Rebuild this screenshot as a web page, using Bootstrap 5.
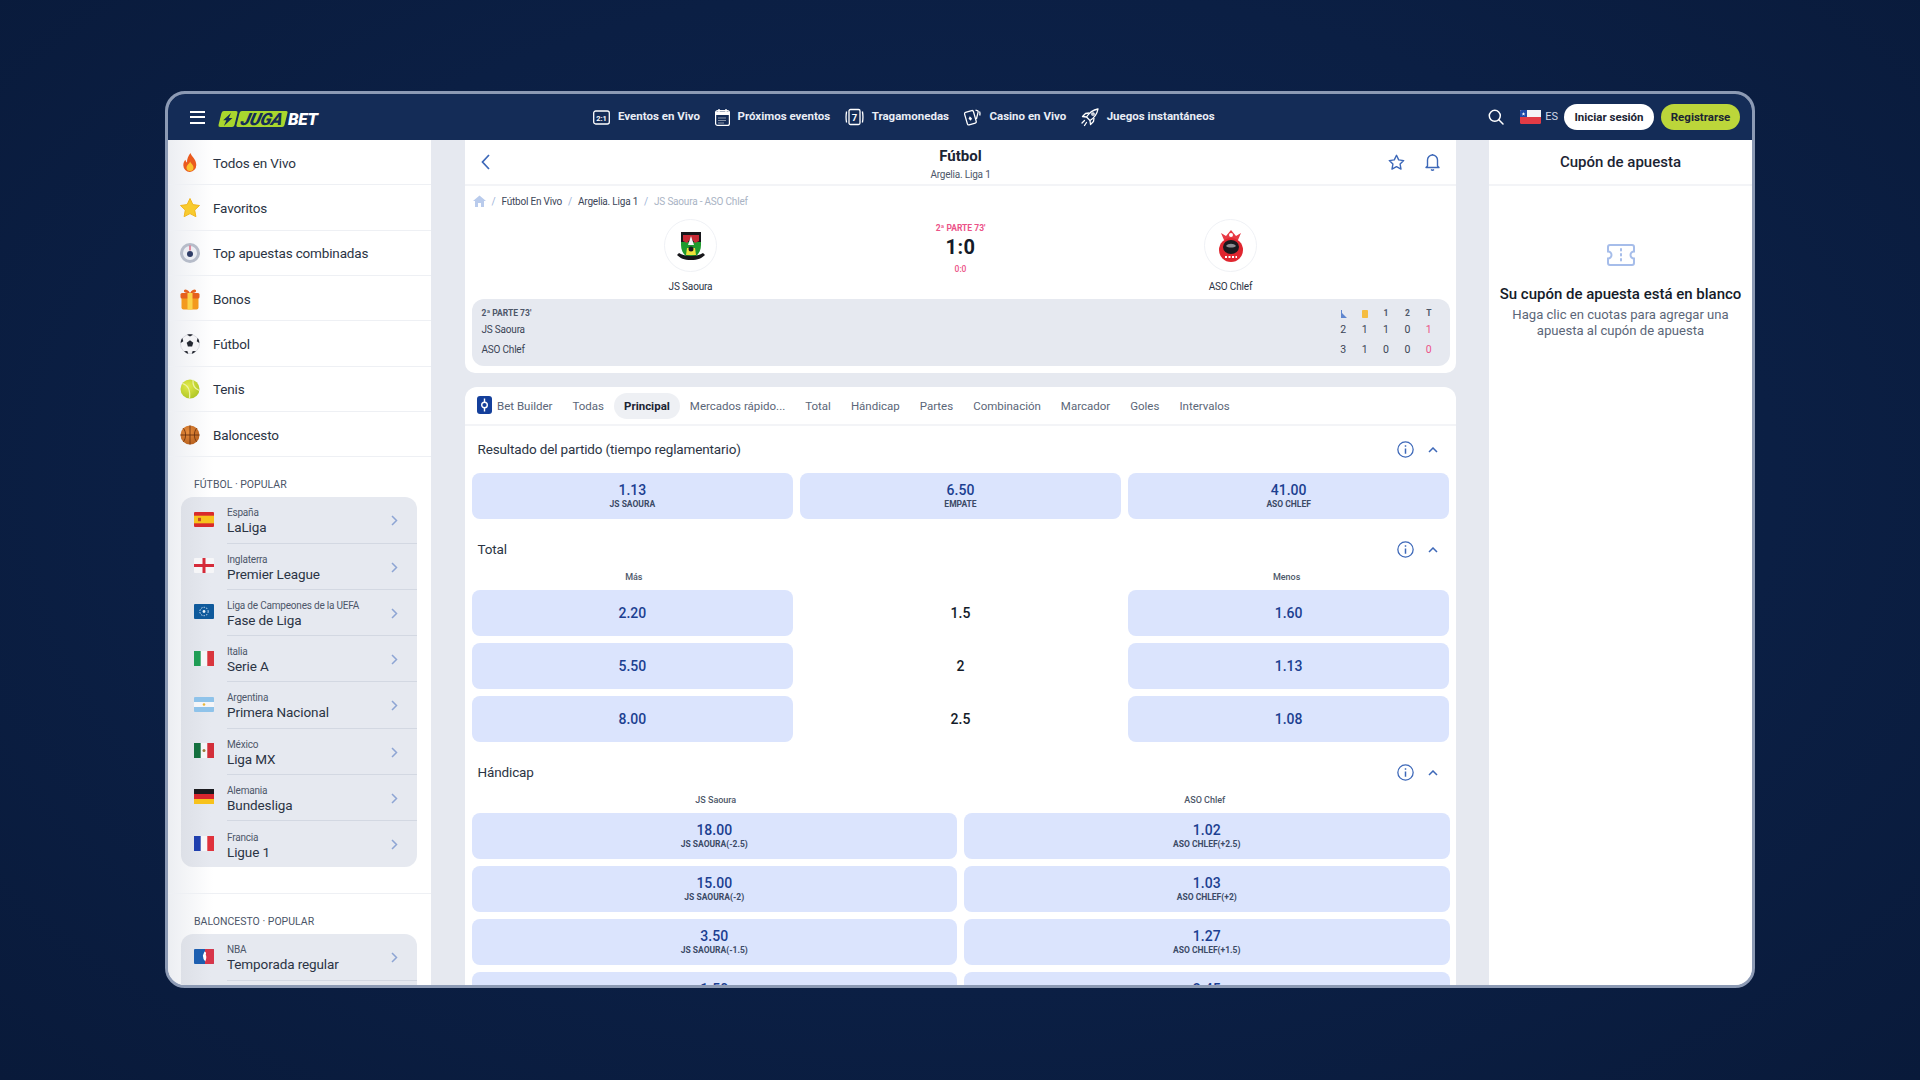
<!DOCTYPE html>
<html lang="es">
<head>
  <meta charset="UTF-8" />
  <meta name="viewport" content="width=device-width, initial-scale=1" />
  <title>JugaBet - Fútbol</title>
  <link href="https://cdn.jsdelivr.net/npm/bootstrap@5.3.2/dist/css/bootstrap.min.css" rel="stylesheet" />
  <style>
    html, body { height: 100%; }
    body {
      font-family: Roboto, "Liberation Sans", sans-serif;
      background: radial-gradient(ellipse at 50% 45%, #0e2550 0%, #0b1f44 60%, #091a3a 100%);
      overflow: hidden;
      padding-top: 91px;
    }
    .app-window {
      width: 1590px;
      height: 897px;
      border: 3px solid #8c9ab4;
      border-radius: 20px;
      background: #e6e9f0;
      overflow: hidden;
    }
    /* top bar */
    .top-bar { height: 46px; flex: none; background: #142c57; color: #fff; }
    .burger { width: 15px; margin-left: 22px; }
    .burger span { display: block; height: 2px; background: #fff; margin: 3.5px 0; }
    .brand { margin: 4px 0 0 15px; width: 100px; height: 16px; font: italic 900 17px/16px Roboto, sans-serif; letter-spacing: -.3px; }
    .brand-bolt, .brand-juga { background: #a9d62e; transform: skewX(-14deg); border-radius: 2px; height: 16px; }
    .brand-bolt { width: 16px; }
    .brand-juga { width: 48px; margin-left: 2px; color: #142c57; text-align: center; }
    .brand-bet { margin-left: 2px; }
    .top-nav { margin-left: 273px; }
    .top-link { font-size: 11.5px; font-weight: 700; color: #e9edf5; text-decoration: none; margin-right: 14.5px; line-height: 14px; margin-top: -2px; }
    .top-link svg { margin-right: 8px; margin-top: 2px; }
    .lang { font-size: 11px; color: #d3d9e6; margin-right: 6px; }
    .btn-login, .btn-signup {
      font-size: 11.5px; font-weight: 700; height: 26px; padding: 0; border: 0; border-radius: 13px; color: #1b2433; line-height: 26px;
    }
    .btn-login { width: 90px; background: #fff; }
    .btn-signup { width: 79px; background: #bcd63a; margin: 0 12px 0 7px; }
    /* main columns */
    .body-row { height: 848px; overflow: hidden; }
    .side-col { width: 263px; flex: none; background: linear-gradient(90deg, #eceef2 0, #fff 45px); overflow: hidden; }
    .center-col { width: 991px; flex: none; margin: 0 33px 0 34px; }
    .right-col { width: 263px; flex: none; background: #fff; }
    /* sidebar */
    .side-item { height: 45.33px; border-bottom: 1px solid #eef0f4; padding: 1px 0 0 11px; font-size: 13.5px; letter-spacing: -.15px; color: #2b3444; }
    .side-item svg { width: 22px; height: 22px; margin-right: 12px; flex: none; }
    .side-head { font-size: 10.5px; color: #4b5568; padding-left: 26px; line-height: 14px; }
    .side-head.first { margin: 21px 0 5px; }
    .side-gap { height: 27px; border-bottom: 1px solid #eef0f4; }
    .league-group { margin: 0 14px 0 13px; background: linear-gradient(90deg, #dde0e7 0, #e6e9f0 30px); border-radius: 12px; overflow: hidden; }
    .league-row { height: 46.25px; position: relative; }
    .league-row > svg.flag { width: 20px; height: 15px; margin: 0 13px 2px 13px; flex: none; }
    .league-text { flex: 1; height: 100%; padding-top: 3px; border-bottom: 1px solid #d3d8e2; display: flex; flex-direction: column; justify-content: center; }
    .league-row:last-child .league-text { border-bottom: 0; }
    .league-country { font-size: 10px; letter-spacing: -.2px; color: #4d5769; line-height: 13px; }
    .league-name { font-size: 13.5px; letter-spacing: -.1px; color: #2b3444; line-height: 18px; margin-top: -1px; }
    .league-arrow { position: absolute; right: 19px; top: 18px; width: 7px; height: 11px; }
    /* centre */
    .info-panel { background: #fff; height: 233px; border-radius: 0 0 10px 10px; padding: 0 6.5px; }
    .info-head { display: grid; grid-template-columns: 1fr auto 1fr; align-items: center; height: 46px; margin: 0 -6.5px; padding: 0 16px; border-bottom: 2px solid #f3f4f7; }
    .info-title-box { padding-top: 3px; text-align: center; }
    .info-title { font-size: 15px; font-weight: 700; color: #1b2433; line-height: 18px; }
    .info-sub { font-size: 10px; letter-spacing: -.2px; color: #4d5769; line-height: 13px; margin-top: 3px; }
    .info-btns svg + svg { margin-left: 20px; }
    .crumbs { height: 29px; padding: 1px 0 0 1px; font-size: 10px; letter-spacing: -.2px; }
    .crumbs .breadcrumb { margin: 0; --bs-breadcrumb-item-padding-x: 6px; --bs-breadcrumb-item-active-color: #a9b3c4; }
    .crumbs a { color: #3c4658; text-decoration: none; }
    .crumbs .breadcrumb-item + .breadcrumb-item::before { color: #9db3d8; }
    .match-grid { display: grid; grid-template-columns: 1fr 102px 1fr; height: 84px; }
    .team-box { padding-top: 4px; text-align: center; }
    .crest { width: 53px; height: 53px; border-radius: 50%; border: 1px solid #eff1f5; margin: 0 auto 7px; }
    .team-name { font-size: 10px; letter-spacing: -.15px; line-height: 16px; color: #2b3444; }
    .score-box { text-align: center; padding-top: 7px; color: #ec5288; }
    .score-part { font-size: 8.5px; font-weight: 700; line-height: 12px; }
    .score-big { font-size: 20px; font-weight: 700; line-height: 24px; color: #141b29; letter-spacing: .4px; margin-top: 1px; }
    .score-half { font-size: 8.5px; font-weight: 500; line-height: 12px; margin-top: 4px; }
    .stats-box { height: 67px; background: #e6e9f0; border-radius: 12px; padding: 8px 10px 6px; color: #3a4455; }
    .stats-row { display: grid; grid-template-columns: 1fr repeat(5, 21.4px); line-height: 20px; font-size: 10.5px; text-align: center; }
    .stats-row > :first-child { text-align: left; font-size: 10px; letter-spacing: -.2px; }
    .stats-row.stats-top { line-height: 13px; font-size: 8.5px; font-weight: 700; color: #4d5769; }
    .stats-row.stats-top > :first-child { font-size: 8.5px; letter-spacing: 0; }
    .pink { color: #ec5288; }
    .markets-panel { margin-top: 14px; background: #fff; border-radius: 12px 12px 0 0; height: 600px; padding: 0 6.5px; }
    .tabs-row { height: 39px; margin: 0 -6.5px; padding: 6px 0 0 2px; border-bottom: 2px solid #f3f4f7; flex-wrap: nowrap; }
    .tabs-row .nav-link { height: 26px; padding: 0 10px; font-size: 11.5px; line-height: 26px; color: #5b6678; border-radius: 13px; white-space: nowrap; }
    .tabs-row .nav-link.active { background: #eef0f4; color: #1b2433; font-weight: 700; }
    .bb-icon { width: 15px; height: 18px; margin-right: 5px; vertical-align: -4px; }
    .market-head { height: 47px; padding: 0 12px 0 6px; font-size: 13.5px; letter-spacing: -.14px; color: #2b3444; }
    .market-head.spaced { margin-top: 7px; }
    .market-head svg + svg { margin-left: 14px; }
    .odds-3 { display: grid; grid-template-columns: repeat(3, 1fr); gap: 7px 6.5px; }
    .odds-2 { display: grid; grid-template-columns: repeat(2, 1fr); gap: 7px; }
    .odds-3.labels, .odds-2.labels { row-gap: 0; }
    .col-label { height: 17px; font-size: 9px; line-height: 9px; font-weight: 500; color: #4d5769; text-align: center; }
    .lbl-l { padding-left: 3px; }
    .lbl-r { padding-right: 4px; }
    .odd-btn {
      height: 46px; padding: 0; border: 0; border-radius: 8px; background: #dbe4fd; color: #1c3f91;
      font-size: 14px; font-weight: 500; line-height: 18px;
    }
    .odd-btn:has(small) { padding-bottom: 2px; }
    .odd-btn small { display: block; font-size: 8.5px; line-height: 11px; font-weight: 700; color: #3b4a66; }
    .odd-mid { padding-top: 1px; font-size: 14px; font-weight: 500; color: #141b29; }
    /* betslip */
    .slip-head { height: 46px; padding-top: 1px; border-bottom: 2px solid #f3f4f7; font-size: 15px; font-weight: 500; color: #1b2433; }
    .slip-empty { padding-top: 58px; text-align: center; }
    .slip-empty svg { display: block; margin: 0 auto; }
    .slip-title { font-size: 15px; font-weight: 500; color: #141b29; margin-top: 18px; line-height: 20px; }
    .slip-text { font-size: 13.1px; line-height: 16px; color: #5b6678; margin-top: 3px; padding: 0 6px; }
  </style>
</head>
<body class="d-flex justify-content-center align-items-start">
  <div class="app-window d-flex flex-column">

    <!-- barra superior -->
    <header class="top-bar d-flex align-items-center">
      <div class="burger"><span></span><span></span><span></span></div>
      <div class="brand d-flex">
        <span class="brand-bolt d-flex align-items-center justify-content-center">
          <svg width="12" height="13" viewBox="0 0 12 13"><path d="M7.5 0 1.5 7.3h3.2L3.6 13l6.6-8H6.6z" fill="#142c57"/></svg>
        </span>
        <span class="brand-juga">JUGA</span>
        <span class="brand-bet">BET</span>
      </div>
      <nav class="top-nav d-flex align-items-center">
        <a class="top-link d-flex align-items-center" href="#">
          <svg width="17" height="15" viewBox="0 0 17 15" fill="none" stroke="#fff" stroke-width="1.3"><rect x=".7" y="1" width="15.6" height="13" rx="2"/><text x="8.5" y="10.8" font-size="7.5" font-weight="700" fill="#fff" stroke="none" text-anchor="middle">2:1</text></svg>
          Eventos en Vivo
        </a>
        <a class="top-link d-flex align-items-center" href="#">
          <svg width="15" height="17" viewBox="0 0 15 17"><rect x=".6" y="1.6" width="13.8" height="14.8" rx="2" fill="none" stroke="#fff" stroke-width="1.2"/><path d="M1 2.5h13V6H1z" fill="#fff"/><path d="M4 0v3M11 0v3" stroke="#fff" stroke-width="1.4"/><path d="M3.5 9h8M3.5 11.5h8M3.5 14h5" stroke="#fff" stroke-width="1" stroke-dasharray="1 1"/></svg>
          Próximos eventos
        </a>
        <a class="top-link d-flex align-items-center" href="#">
          <svg width="19" height="18" viewBox="0 0 19 18" fill="none" stroke="#fff" stroke-width="1.3"><rect x="4" y="1.5" width="11" height="15" rx="1.5"/><path d="M1.6 3.5c-.6 3-.6 8 0 11M17.4 3.5c.6 3 .6 8 0 11"/><text x="9.5" y="12.8" font-size="9.5" font-weight="700" fill="#fff" stroke="none" text-anchor="middle">7</text></svg>
          Tragamonedas
        </a>
        <a class="top-link d-flex align-items-center" href="#">
          <svg width="18" height="19" viewBox="0 0 18 19" fill="none" stroke="#fff" stroke-width="1.3"><rect x="2.8" y="3.2" width="9.2" height="13" rx="1.4" transform="rotate(-16 7.4 9.7)"/><path d="M6.8 8.2 9 10.4l-1.2 2.4-2.2-2z" fill="#fff" stroke="none"/><path d="m12.5 2.2 1.8.5c.6.2 1 .8.8 1.4l-1.7 7M16.5 3.5c.6 1.2.6 2.6.2 4"/></svg>
          Casino en Vivo
        </a>
        <a class="top-link d-flex align-items-center me-0" href="#">
          <svg width="18" height="19" viewBox="0 0 18 19" fill="none" stroke="#fff" stroke-width="1.3" stroke-linejoin="round"><path d="M17 1C11.5 2 8 5 5.5 9L9 12.5C13 10 16 6.5 17 1z"/><path d="M5.500 9l-4-.5 3-3L8 5M9 12.500l.5 4 3-3 .5-3.500"/><path d="M3.500 12.500 1 15M5.500 14.500l-2 3" stroke-linecap="round"/><circle cx="12" cy="6" r="1.2"/></svg>
          Juegos instantáneos
        </a>
      </nav>
      <div class="ms-auto d-flex align-items-center">
        <svg class="me-3" width="16" height="16" viewBox="0 0 16 16" fill="none" stroke="#fff" stroke-width="1.5"><circle cx="6.8" cy="6.8" r="5.5"/><path d="M10.8 10.8 15 15" stroke-linecap="round"/></svg>
        <svg class="me-1" width="21" height="14" viewBox="0 0 21 14"><rect width="21" height="14" rx="1.5" fill="#e23b45"/><path d="M0 1.500A1.500 1.500 0 0 1 1.500 0H21v7H0z" fill="#f4f4f6"/><path d="M0 1.500A1.500 1.500 0 0 1 1.500 0H7v7H0z" fill="#1f4aa8"/><path d="m3.500 2 .5 1.400h1.400l-1.100.8.400 1.400-1.200-.8-1.200.8.400-1.400-1.100-.8H3z" fill="#fff"/></svg>
        <span class="lang">ES</span>
        <button class="btn btn-login" type="button">Iniciar sesión</button>
        <button class="btn btn-signup" type="button">Registrarse</button>
      </div>
    </header>

    <div class="body-row d-flex">

      <!-- menu lateral -->
      <aside class="side-col">
        <div class="side-item d-flex align-items-center">
          <svg viewBox="0 0 22 22"><path d="M11.500 1c.8 3.500 5.800 6 5.800 12a6.500 6.800 0 0 1-13 .2c0-2.500 1-4.200 2.200-5.400.2 1.500.7 2.300 1.500 2.800C7.700 7 9.500 3.500 11.500 1z" fill="#ea5a1e"/><path d="M11.200 9.500c.5 2 3.300 3.300 3.300 6a3.500 3.500 0 0 1-7 0c0-2.300 2.700-3.500 3.700-6z" fill="#fbc02d"/></svg>
          Todos en Vivo
        </div>
        <div class="side-item d-flex align-items-center">
          <svg viewBox="0 0 22 22"><path d="m11 1.500 2.900 6.100 6.600.9-4.800 4.600 1.200 6.600L11 16.600l-5.900 3.100 1.200-6.600L1.500 8.500l6.600-.9z" fill="#f8cb2e" stroke="#f0b61f" stroke-linejoin="round"/></svg>
          Favoritos
        </div>
        <div class="side-item d-flex align-items-center">
          <svg viewBox="0 0 22 22"><circle cx="11" cy="11" r="10" fill="#b6bcc9"/><circle cx="11" cy="11" r="7" fill="#eceef3"/><circle cx="11" cy="12" r="3" fill="#2f3d66"/><path d="M11 3.500v5" stroke="#e0718a" stroke-width="1.6"/></svg>
          Top apuestas combinadas
        </div>
        <div class="side-item d-flex align-items-center">
          <svg viewBox="0 0 22 22"><rect x="2.500" y="6.500" width="17" height="15" rx="2" fill="#f39a1f"/><rect x="1.500" y="5" width="19" height="5.500" rx="1.500" fill="#e5611f"/><rect x="8.500" y="5" width="5" height="16.500" fill="#fbd34a"/><path d="M11 5C8 .5 4.500 1 5 3.500c.3 1.300 3 1.500 6 1.500zm0 0c3-4.500 6.500-4 6-1.500-.3 1.300-3 1.500-6 1.500z" fill="#e5611f"/></svg>
          Bonos
        </div>
        <div class="side-item d-flex align-items-center">
          <svg viewBox="0 0 22 22"><circle cx="11" cy="11" r="9.500" fill="#f4f4f6" stroke="#c7cad2" stroke-width=".6"/><path d="m11 7.300 3.300 2.400-1.200 3.900H8.900L7.700 9.700z" fill="#232730"/><path d="M8 1.800 11 3.500l3-1.700C12 1.200 10 1.200 8 1.800zM1.700 10l2.600-1.800L3.300 5C2.300 6.400 1.700 8.200 1.700 10zM20.300 10l-2.600-1.800 1-3.200c1 1.400 1.600 3.200 1.600 5zM5 18.300l3.300-.3 1 2.800c-1.700-.3-3.100-1.300-4.300-2.500zM17 18.300 13.700 18l-1 2.800c1.700-.3 3.100-1.300 4.300-2.500z" fill="#232730"/></svg>
          Fútbol
        </div>
        <div class="side-item d-flex align-items-center">
          <svg viewBox="0 0 22 22"><defs><radialGradient id="gTenis" cx=".4" cy=".35" r=".8"><stop offset="0" stop-color="#e2ea4a"/><stop offset="1" stop-color="#a6c020"/></radialGradient></defs><circle cx="11" cy="11" r="9.500" fill="url(#gTenis)"/><path d="M3.500 5.500C9 7 11.500 12 10.500 20.500M14 1.700C13.500 7 16 11 20.300 12.500" fill="none" stroke="#eef3a8" stroke-width="1.2"/></svg>
          Tenis
        </div>
        <div class="side-item d-flex align-items-center">
          <svg viewBox="0 0 22 22"><defs><radialGradient id="gBasket" cx=".4" cy=".35" r=".8"><stop offset="0" stop-color="#e88d3c"/><stop offset="1" stop-color="#b05a1a"/></radialGradient></defs><circle cx="11" cy="11" r="9.500" fill="url(#gBasket)"/><path d="M11 1.500v19M1.500 11h19M4.300 4.300c3 3 3 10.400 0 13.400M17.700 4.300c-3 3-3 10.400 0 13.400" fill="none" stroke="#6e3410" stroke-width=".9"/></svg>
          Baloncesto
        </div>

        <div class="side-head first">FÚTBOL · POPULAR</div>
        <div class="league-group">
          <div class="league-row d-flex align-items-center">
            <svg class="flag" viewBox="0 0 20 15"><rect width="20" height="15" rx="1" fill="#d92b2b"/><rect y="3.700" width="20" height="7.600" fill="#f7c21c"/><rect x="4" y="5.800" width="3" height="3.400" fill="#c44a20"/></svg>
            <div class="league-text"><div class="league-country">España</div><div class="league-name">LaLiga</div></div>
            <svg class="league-arrow" viewBox="0 0 7 11" fill="none" stroke="#8ea5d4" stroke-width="1.5"><path d="m1 1 4.500 4.500L1 10"/></svg>
          </div>
          <div class="league-row d-flex align-items-center">
            <svg class="flag" viewBox="0 0 20 15"><rect width="20" height="15" rx="1" fill="#f6f6f8"/><path d="M8.500 0h3v15h-3zM0 6h20v3H0z" fill="#d52b3a"/></svg>
            <div class="league-text"><div class="league-country">Inglaterra</div><div class="league-name">Premier League</div></div>
            <svg class="league-arrow" viewBox="0 0 7 11" fill="none" stroke="#8ea5d4" stroke-width="1.5"><path d="m1 1 4.500 4.500L1 10"/></svg>
          </div>
          <div class="league-row d-flex align-items-center">
            <svg class="flag" viewBox="0 0 20 15"><rect width="20" height="15" rx="1" fill="#0f5a9c"/><circle cx="10" cy="7.500" r="4.200" fill="none" stroke="#cfe2f5" stroke-width="1" stroke-dasharray="1.500 1.200"/><circle cx="10" cy="7.500" r="1.400" fill="#e8f1fa"/></svg>
            <div class="league-text"><div class="league-country">Liga de Campeones de la UEFA</div><div class="league-name">Fase de Liga</div></div>
            <svg class="league-arrow" viewBox="0 0 7 11" fill="none" stroke="#8ea5d4" stroke-width="1.5"><path d="m1 1 4.500 4.500L1 10"/></svg>
          </div>
          <div class="league-row d-flex align-items-center">
            <svg class="flag" viewBox="0 0 20 15"><rect width="7" height="15" fill="#1f9d55"/><rect x="6.700" width="6.700" height="15" fill="#f6f6f8"/><rect x="13.300" width="6.700" height="15" fill="#d9363e"/></svg>
            <div class="league-text"><div class="league-country">Italia</div><div class="league-name">Serie A</div></div>
            <svg class="league-arrow" viewBox="0 0 7 11" fill="none" stroke="#8ea5d4" stroke-width="1.5"><path d="m1 1 4.500 4.500L1 10"/></svg>
          </div>
          <div class="league-row d-flex align-items-center">
            <svg class="flag" viewBox="0 0 20 15"><rect width="20" height="15" rx="1" fill="#8fc3ea"/><rect y="5" width="20" height="5" fill="#f6f6f8"/><circle cx="10" cy="7.500" r="1.300" fill="#e9b73a"/></svg>
            <div class="league-text"><div class="league-country">Argentina</div><div class="league-name">Primera Nacional</div></div>
            <svg class="league-arrow" viewBox="0 0 7 11" fill="none" stroke="#8ea5d4" stroke-width="1.5"><path d="m1 1 4.500 4.500L1 10"/></svg>
          </div>
          <div class="league-row d-flex align-items-center">
            <svg class="flag" viewBox="0 0 20 15"><rect width="7" height="15" fill="#14703f"/><rect x="6.700" width="6.700" height="15" fill="#f6f6f8"/><rect x="13.300" width="6.700" height="15" fill="#d32f3a"/><circle cx="10" cy="7.500" r="1.500" fill="#9b7a3a"/></svg>
            <div class="league-text"><div class="league-country">México</div><div class="league-name">Liga MX</div></div>
            <svg class="league-arrow" viewBox="0 0 7 11" fill="none" stroke="#8ea5d4" stroke-width="1.5"><path d="m1 1 4.500 4.500L1 10"/></svg>
          </div>
          <div class="league-row d-flex align-items-center">
            <svg class="flag" viewBox="0 0 20 15"><rect width="20" height="5" fill="#1b1b1f"/><rect y="5" width="20" height="5" fill="#d9262e"/><rect y="10" width="20" height="5" fill="#f7c21c"/></svg>
            <div class="league-text"><div class="league-country">Alemania</div><div class="league-name">Bundesliga</div></div>
            <svg class="league-arrow" viewBox="0 0 7 11" fill="none" stroke="#8ea5d4" stroke-width="1.5"><path d="m1 1 4.500 4.500L1 10"/></svg>
          </div>
          <div class="league-row d-flex align-items-center">
            <svg class="flag" viewBox="0 0 20 15"><rect width="7" height="15" fill="#1f3fae"/><rect x="6.700" width="6.700" height="15" fill="#f6f6f8"/><rect x="13.300" width="6.700" height="15" fill="#e0323c"/></svg>
            <div class="league-text"><div class="league-country">Francia</div><div class="league-name">Ligue 1</div></div>
            <svg class="league-arrow" viewBox="0 0 7 11" fill="none" stroke="#8ea5d4" stroke-width="1.5"><path d="m1 1 4.500 4.500L1 10"/></svg>
          </div>
        </div>
        <div class="side-gap"></div>
        <div class="side-head first">BALONCESTO · POPULAR</div>
        <div class="league-group">
          <div class="league-row d-flex align-items-center">
            <svg class="flag" viewBox="0 0 20 15"><rect width="20" height="15" rx="1" fill="#1d5fb0"/><path d="M11 0h8a1 1 0 0 1 1 1v13a1 1 0 0 1-1 1h-8z" fill="#d8364a"/><path d="M10.500 2.500c1.600.5 2 2 1.200 3.300 1 1.500.8 4-.4 6.700l-1.800-2.500-.6-3.500z" fill="#fff"/></svg>
            <div class="league-text"><div class="league-country">NBA</div><div class="league-name">Temporada regular</div></div>
            <svg class="league-arrow" viewBox="0 0 7 11" fill="none" stroke="#8ea5d4" stroke-width="1.5"><path d="m1 1 4.500 4.500L1 10"/></svg>
          </div>
          <div class="league-row"></div>
        </div>
      </aside>

      <main class="center-col">
        <section class="info-panel">
          <div class="info-head">
            <svg width="9" height="16" viewBox="0 0 9 16" fill="none" stroke="#3d68b8" stroke-width="1.7"><path d="M8 1 1.500 8 8 15"/></svg>
            <div class="info-title-box">
              <div class="info-title">Fútbol</div>
              <div class="info-sub">Argelia. Liga 1</div>
            </div>
            <div class="info-btns d-flex align-items-center justify-content-end">
              <svg width="17" height="17" viewBox="0 0 17 17" fill="none" stroke="#3d68b8" stroke-width="1.4" stroke-linejoin="round"><path d="m8.500 1.300 2.200 4.600 5 .7-3.600 3.500.9 5-4.500-2.400-4.500 2.400.9-5L1.300 6.600l5-.7z"/></svg>
              <svg width="15" height="18" viewBox="0 0 15 18" fill="none" stroke="#3d68b8" stroke-width="1.4"><path d="M2.500 13V7a5 5 0 0 1 10 0v6l1.500 1.500H1z" stroke-linejoin="round"/><path d="M6 16.500c.8.700 2.200.7 3 0M7.500 1v1"/></svg>
            </div>
          </div>

          <div class="crumbs d-flex align-items-center">
            <ol class="breadcrumb">
              <li class="breadcrumb-item">
                <a href="#"><svg width="13" height="12" viewBox="0 0 13 12" style="vertical-align:-2px"><path d="M6.500.5 0 6h2v6h3V8h3v4h3V6h2z" fill="#b9cbec"/></svg></a>
              </li>
              <li class="breadcrumb-item"><a href="#">Fútbol En Vivo</a></li>
              <li class="breadcrumb-item"><a href="#">Argelia. Liga 1</a></li>
              <li class="breadcrumb-item active">JS Saoura - ASO Chlef</li>
            </ol>
          </div>

          <div class="match-grid">
            <div class="team-box">
              <div class="crest d-flex align-items-center justify-content-center">
                <svg width="30" height="34" viewBox="0 0 30 34">
                  <path d="M5 4h20v12c0 7-4 12-10 14C9 28 5 23 5 16z" fill="#1f9a2e"/>
                  <path d="M5 3h20v10H5z" fill="#17171b"/>
                  <path d="M7 6h16v6l-4 2-4-5-4 5-4-2z" fill="#c72a35"/>
                  <path d="m15 7 3 9h-6z" fill="#f4f4f6"/>
                  <path d="M11 19h8l1 7H10z" fill="#efe23a"/>
                  <circle cx="15" cy="20" r="2.500" fill="#1a1a1e"/>
                  <path d="M1 26c3 3 7 5 14 5s11-2 14-5l-2-2c-3 2-7 3-12 3s-9-1-12-3z" fill="#17171b"/>
                </svg>
              </div>
              <div class="team-name">JS Saoura</div>
            </div>
            <div class="score-box">
              <div class="score-part">2ª PARTE 73'</div>
              <div class="score-big">1:0</div>
              <div class="score-half">0:0</div>
            </div>
            <div class="team-box">
              <div class="crest d-flex align-items-center justify-content-center">
                <svg width="28" height="34" viewBox="0 0 28 34">
                  <path d="M7 11 4 4l5 3 5-6 5 6 5-3-3 7z" fill="#e83a45"/>
                  <circle cx="14" cy="6" r="2" fill="#fff"/>
                  <ellipse cx="14" cy="21" rx="12" ry="12" fill="#e0262f"/>
                  <ellipse cx="14" cy="18" rx="8" ry="7" fill="#1a1a1e"/>
                  <path d="M9 17c2-3 8-3 10 0-2 2-8 2-10 0z" fill="#8d8d92"/>
                  <path d="M8 28h12" stroke="#fff" stroke-width="2" stroke-dasharray="2 1.500"/>
                </svg>
              </div>
              <div class="team-name">ASO Chlef</div>
            </div>
          </div>

          <div class="stats-box">
            <div class="stats-row stats-top">
              <span>2ª PARTE 73'</span>
              <span><svg width="7" height="8" viewBox="0 0 7 8"><path d="M1 0v8h6L2 3V0z" fill="#5f86cf"/></svg></span>
              <span><svg width="6" height="8" viewBox="0 0 6 8"><rect width="6" height="8" rx=".8" fill="#f5bd41"/></svg></span>
              <span>1</span><span>2</span><span>T</span>
            </div>
            <div class="stats-row"><span>JS Saoura</span><span>2</span><span>1</span><span>1</span><span>0</span><span class="pink">1</span></div>
            <div class="stats-row"><span>ASO Chlef</span><span>3</span><span>1</span><span>0</span><span>0</span><span class="pink">0</span></div>
          </div>
        </section>

        <section class="markets-panel">
          <ul class="nav tabs-row">
            <li class="nav-item"><a class="nav-link" href="#"><svg class="bb-icon" viewBox="0 0 15 18"><rect width="15" height="18" rx="3" fill="#143f9b"/><circle cx="7.500" cy="9" r="2.800" fill="none" stroke="#fff" stroke-width="1.4"/><path d="M7.500 2.500V6M7.500 12v3.500" stroke="#fff" stroke-width="1.4"/></svg>Bet Builder</a></li>
            <li class="nav-item"><a class="nav-link" href="#">Todas</a></li>
            <li class="nav-item"><a class="nav-link active" href="#">Principal</a></li>
            <li class="nav-item"><a class="nav-link" href="#">Mercados rápido...</a></li>
            <li class="nav-item"><a class="nav-link" href="#">Total</a></li>
            <li class="nav-item"><a class="nav-link" href="#">Hándicap</a></li>
            <li class="nav-item"><a class="nav-link" href="#">Partes</a></li>
            <li class="nav-item"><a class="nav-link" href="#">Combinación</a></li>
            <li class="nav-item"><a class="nav-link" href="#">Marcador</a></li>
            <li class="nav-item"><a class="nav-link" href="#">Goles</a></li>
            <li class="nav-item"><a class="nav-link" href="#">Intervalos</a></li>
          </ul>

          <div class="market-head d-flex align-items-center">
            <span class="me-auto">Resultado del partido (tiempo reglamentario)</span>
            <svg width="17" height="17" viewBox="0 0 16 16" fill="none" stroke="#3d68b8" stroke-width="1.2"><circle cx="8" cy="8" r="7.2"/><path d="M8 7v5M8 4v1.400" stroke-width="1.4"/></svg>
            <svg width="10" height="6" viewBox="0 0 10 6" fill="none" stroke="#3d68b8" stroke-width="1.5"><path d="m1 5 4-4 4 4"/></svg>
          </div>
          <div class="odds-3">
            <button class="btn odd-btn" type="button">1.13<small>JS SAOURA</small></button>
            <button class="btn odd-btn" type="button">6.50<small>EMPATE</small></button>
            <button class="btn odd-btn" type="button">41.00<small>ASO CHLEF</small></button>
          </div>

          <div class="market-head spaced d-flex align-items-center">
            <span class="me-auto">Total</span>
            <svg width="17" height="17" viewBox="0 0 16 16" fill="none" stroke="#3d68b8" stroke-width="1.2"><circle cx="8" cy="8" r="7.2"/><path d="M8 7v5M8 4v1.400" stroke-width="1.4"/></svg>
            <svg width="10" height="6" viewBox="0 0 10 6" fill="none" stroke="#3d68b8" stroke-width="1.5"><path d="m1 5 4-4 4 4"/></svg>
          </div>
          <div class="odds-3 labels">
            <div class="col-label lbl-l">Más</div><div></div><div class="col-label lbl-r">Menos</div>
          </div>
          <div class="odds-3">
            <button class="btn odd-btn" type="button">2.20</button>
            <div class="odd-mid d-flex align-items-center justify-content-center">1.5</div>
            <button class="btn odd-btn" type="button">1.60</button>
            <button class="btn odd-btn" type="button">5.50</button>
            <div class="odd-mid d-flex align-items-center justify-content-center">2</div>
            <button class="btn odd-btn" type="button">1.13</button>
            <button class="btn odd-btn" type="button">8.00</button>
            <div class="odd-mid d-flex align-items-center justify-content-center">2.5</div>
            <button class="btn odd-btn" type="button">1.08</button>
          </div>

          <div class="market-head spaced d-flex align-items-center">
            <span class="me-auto">Hándicap</span>
            <svg width="17" height="17" viewBox="0 0 16 16" fill="none" stroke="#3d68b8" stroke-width="1.2"><circle cx="8" cy="8" r="7.2"/><path d="M8 7v5M8 4v1.400" stroke-width="1.4"/></svg>
            <svg width="10" height="6" viewBox="0 0 10 6" fill="none" stroke="#3d68b8" stroke-width="1.5"><path d="m1 5 4-4 4 4"/></svg>
          </div>
          <div class="odds-2 labels">
            <div class="col-label lbl-l">JS Saoura</div><div class="col-label lbl-r">ASO Chlef</div>
          </div>
          <div class="odds-2">
            <button class="btn odd-btn" type="button">18.00<small>JS SAOURA(-2.5)</small></button>
            <button class="btn odd-btn" type="button">1.02<small>ASO CHLEF(+2.5)</small></button>
            <button class="btn odd-btn" type="button">15.00<small>JS SAOURA(-2)</small></button>
            <button class="btn odd-btn" type="button">1.03<small>ASO CHLEF(+2)</small></button>
            <button class="btn odd-btn" type="button">3.50<small>JS SAOURA(-1.5)</small></button>
            <button class="btn odd-btn" type="button">1.27<small>ASO CHLEF(+1.5)</small></button>
            <button class="btn odd-btn" type="button">1.50<small>JS SAOURA(-1)</small></button>
            <button class="btn odd-btn" type="button">2.45<small>ASO CHLEF(+1)</small></button>
          </div>
        </section>
      </main>

      <!-- cupon -->
      <aside class="right-col">
        <div class="slip-head d-flex align-items-center justify-content-center">Cupón de apuesta</div>
        <div class="slip-empty">
          <svg width="28" height="22" viewBox="0 0 28 22" fill="none" stroke="#a6bdea" stroke-width="2"><path d="M3 1h22a2 2 0 0 1 2 2v4.500a3.500 3.500 0 0 0 0 7V19a2 2 0 0 1-2 2H3a2 2 0 0 1-2-2v-4.500a3.500 3.500 0 0 0 0-7V3a2 2 0 0 1 2-2z"/><path d="M14 5v1.500M14 10v1.500M14 15v1.500" stroke-linecap="round"/></svg>
          <div class="slip-title">Su cupón de apuesta está en blanco</div>
          <div class="slip-text">Haga clic en cuotas para agregar una apuesta al cupón de apuesta</div>
        </div>
      </aside>

    </div>
  </div>

  <script src="https://cdn.jsdelivr.net/npm/bootstrap@5.3.2/dist/js/bootstrap.bundle.min.js"></script>
</body>
</html>
